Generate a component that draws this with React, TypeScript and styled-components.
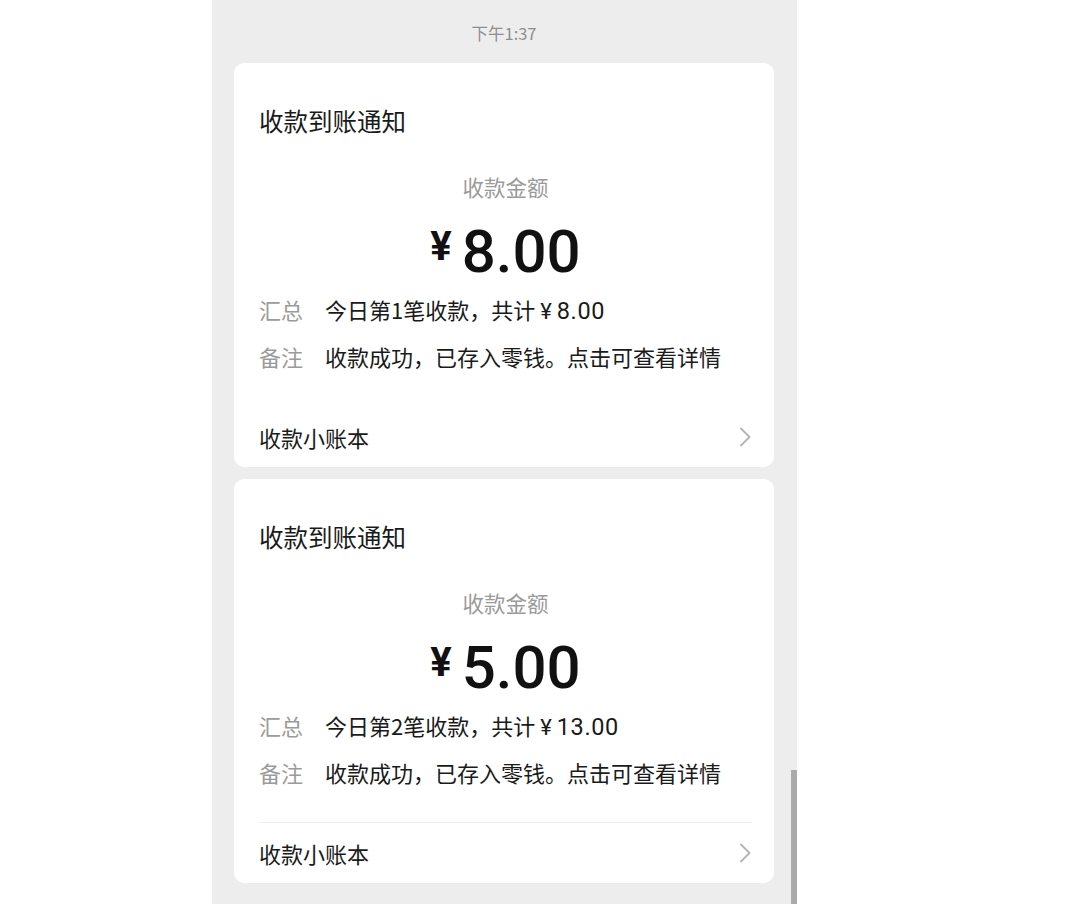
import React from "react";
import styled, { createGlobalStyle } from "styled-components";

const Global = createGlobalStyle`
  html, body { margin: 0; padding: 0; background: #ffffff; }
  body { font-family: "Noto Sans CJK SC", "Noto Sans", sans-serif; }
`;

const Page = styled.div`
  width: 1080px;
  height: 904px;
  overflow: hidden;
  display: flex;
`;

const Panel = styled.div`
  position: relative;
  margin-left: 212px;
  width: 585px;
  height: 904px;
  background: #ededed;
  padding: 22px 23px 0 22px;
  box-sizing: border-box;
  display: flex;
  flex-direction: column;
  gap: 12px;
`;

const Time = styled.div`
  font-size: 16.5px;
  line-height: 22px;
  color: #8e8e8e;
  text-align: center;
  margin-bottom: 7px;
`;

const Card = styled.div`
  background: #ffffff;
  border-radius: 10px;
  padding: 40px 22px 0 25px;
  display: flex;
  flex-direction: column;
  flex-shrink: 0;
`;

const Title = styled.div`
  font-size: 24.5px;
  line-height: 36px;
  color: #1a1a1a;
`;

const AmountLabel = styled.div`
  margin-top: 33px;
  font-size: 21.5px;
  line-height: 30px;
  color: #9a9a9a;
  text-align: center;
`;

const Amount = styled.div`
  margin-top: 13px;
  height: 70px;
  display: flex;
  align-items: center;
  justify-content: center;
  gap: 10px;
  color: #111111;
`;

const Yen = styled.span`
  font-family: Roboto, "Noto Sans", sans-serif;
  font-weight: 700;
  font-size: 40px;
  line-height: 1;
  margin-bottom: 6px;
`;

const Big = styled.span`
  font-family: Roboto, "Noto Sans", sans-serif;
  font-weight: 500;
  font-size: 60px;
  line-height: 1;
  margin-top: 3px;
`;

const Rows = styled.div`
  display: flex;
  flex-direction: column;
`;

const Row = styled.div`
  display: flex;
  align-items: center;
  height: 47px;
  font-size: 22px;
`;

const RowLabel = styled.span`
  width: 66px;
  flex-shrink: 0;
  color: #9b9b9b;
`;

const RowValue = styled.span`
  color: #1a1a1a;
  white-space: nowrap;
`;

const SmallYen = styled.span`
  font-family: Roboto, "Noto Sans", sans-serif;
  font-size: 22px;
  margin: 0 5px 0 5px;
`;

const Num = styled.span`
  font-family: Roboto, "Noto Sans", sans-serif;
  font-size: 23.5px;
  letter-spacing: 0.6px;
`;

const Footer = styled.div<{ $divider?: boolean }>`
  margin-top: 27px;
  height: 61px;
  border-top: 1px solid ${(p) => (p.$divider ? "#ececec" : "transparent")};
  box-sizing: border-box;
  display: flex;
  align-items: center;
  justify-content: space-between;
  font-size: 22px;
  color: #1a1a1a;
`;

const Chevron = styled.svg`
  width: 13px;
  height: 20px;
`;

const Scrollbar = styled.div`
  position: absolute;
  right: 0;
  top: 770px;
  width: 6px;
  height: 134px;
  background: #aaaaaa;
`;

type Notice = { amount: string; nth: number; total: string; divider?: boolean };

const notices: Notice[] = [
  { amount: "8.00", nth: 1, total: "8.00" },
  { amount: "5.00", nth: 2, total: "13.00", divider: true },
];

function NoticeCard({ n }: { n: Notice }) {
  return (
    <Card>
      <Title>收款到账通知</Title>
      <AmountLabel>收款金额</AmountLabel>
      <Amount>
        <Yen>¥</Yen>
        <Big>{n.amount}</Big>
      </Amount>
      <Rows>
        <Row>
          <RowLabel>汇总</RowLabel>
          <RowValue>
            今日第{n.nth}笔收款，共计<SmallYen>¥</SmallYen>
            <Num>{n.total}</Num>
          </RowValue>
        </Row>
        <Row>
          <RowLabel>备注</RowLabel>
          <RowValue>收款成功，已存入零钱。点击可查看详情</RowValue>
        </Row>
      </Rows>
      <Footer $divider={n.divider}>
        <span>收款小账本</span>
        <Chevron viewBox="0 0 13 20" fill="none">
          <path d="M2 1.5 L10.5 10 L2 18.5" stroke="#b4b4b4" strokeWidth="1.8" strokeLinecap="round" strokeLinejoin="round" />
        </Chevron>
      </Footer>
    </Card>
  );
}

export default function App() {
  return (
    <Page>
      <Global />
      <Panel>
        <Time>下午1:37</Time>
        {notices.map((n, i) => (
          <NoticeCard key={i} n={n} />
        ))}
        <Scrollbar />
      </Panel>
    </Page>
  );
}
